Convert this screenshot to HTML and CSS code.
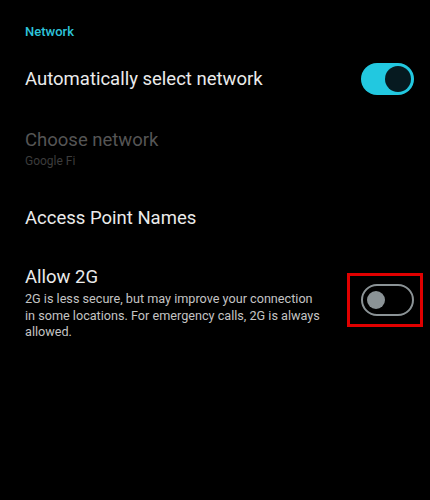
FILE: index.html
```html
<!DOCTYPE html>
<html lang="en">
<head>
  <meta charset="UTF-8">
  <meta name="viewport" content="width=device-width, initial-scale=1.0">
  <title>Network</title>
  <link rel="stylesheet" href="styles.css">
</head>
<body>
  <div class="screen">
    <h2 class="category">Network</h2>

    <div class="pref pref-auto">
      <div class="pref-text">
        <div class="pref-title">Automatically select network</div>
      </div>
      <div class="switch switch-on"><span class="thumb"></span></div>
    </div>

    <div class="pref pref-choose disabled">
      <div class="pref-text">
        <div class="pref-title">Choose network</div>
        <div class="pref-summary">Google Fi</div>
      </div>
    </div>

    <div class="pref pref-apn">
      <div class="pref-text">
        <div class="pref-title">Access Point Names</div>
      </div>
    </div>

    <div class="pref pref-2g">
      <div class="pref-text">
        <div class="pref-title">Allow 2G</div>
        <div class="pref-desc">2G is less secure, but may improve your connection in some locations. For emergency calls, 2G is always allowed.</div>
      </div>
      <div class="highlight">
        <div class="switch switch-off"><span class="thumb"></span></div>
      </div>
    </div>
  </div>
</body>
</html>
```

FILE: styles.css
```css
body {
  margin: 0;
  background-color: #000;
  font-family: Roboto, "Noto Sans", sans-serif;
  color: #e6e6e6;
}
.screen {
  width: 430px;
  height: 500px;
  padding: 22px 0 0 25px;
  box-sizing: border-box;
}
.category {
  margin: 0;
  font-size: 13px;
  font-weight: 500;
  color: #2ec4db;
  line-height: 20px;
}
.pref {
  display: flex;
  align-items: center;
}
.pref-text {
  flex: 1;
}
.pref-title {
  font-size: 18.5px;
  line-height: 24px;
  color: #ebebeb;
}
.pref-auto {
  margin-top: 20px;
  height: 34px;
  padding-right: 16px;
}
.pref-choose {
  margin-top: 32px;
}
.disabled .pref-title {
  color: #555;
}
.pref-summary {
  font-size: 12px;
  line-height: 18px;
  color: #3c3c3c;
}
.pref-apn {
  margin-top: 36px;
}
.pref-2g {
  margin-top: 35px;
  align-items: flex-start;
}
.pref-2g .pref-text {
  flex: 0 0 300px;
}
.pref-desc {
  font-size: 12.65px;
  line-height: 16.5px;
  color: #c4c4c4;
  margin-top: 2px;
}
.switch {
  width: 53px;
  height: 32px;
  border-radius: 16px;
  box-sizing: border-box;
  display: flex;
  align-items: center;
}
.switch-on {
  background-color: #22c8e0;
  justify-content: flex-end;
  padding-right: 3px;
}
.switch-on .thumb {
  width: 26px;
  height: 26px;
  border-radius: 50%;
  background-color: #061a20;
}
.switch-off {
  border: 2px solid #8b9396;
  padding-left: 4px;
}
.switch-off .thumb {
  width: 18px;
  height: 18px;
  border-radius: 50%;
  background-color: #8b9396;
}
.highlight {
  margin-left: 22px;
  margin-top: 8px;
  border: 3px solid #e00000;
  padding: 8px 6px 8px 11px;
}
```
